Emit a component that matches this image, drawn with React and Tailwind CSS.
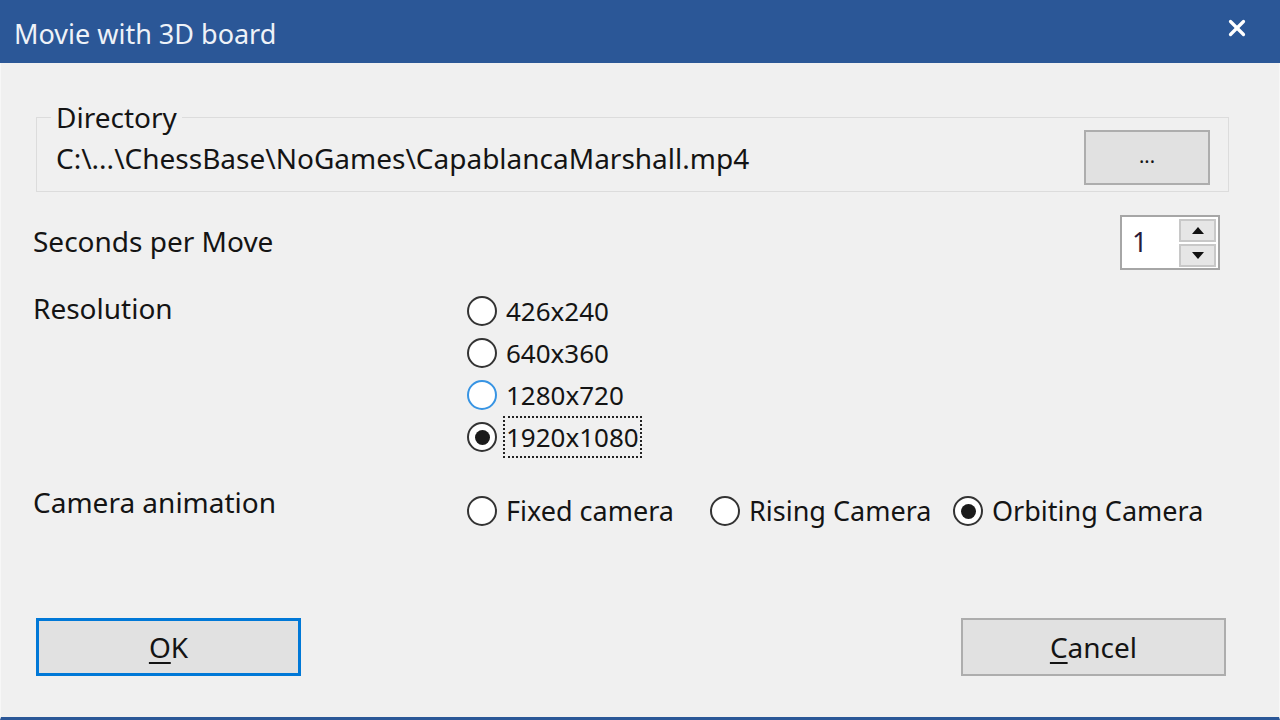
import { X } from 'lucide-react';

function Radio({ label, checked, hover, focus }) {
    return (
        <div className="flex items-center h-[42px] whitespace-nowrap">
            <span
                className={`w-[30px] h-[30px] rounded-full border-2 bg-white flex items-center justify-center shrink-0 ${hover ? 'border-[#3794e3]' : 'border-[#333333]'
                    }`}
            >
                {checked && <span className="w-[15px] h-[15px] rounded-full bg-[#1b1b1b]"></span>}
            </span>
            <span
                className={`ml-[6px] h-[42px] flex items-center pl-[1px] pr-[1px] ${focus ? 'border-2 border-dotted border-[#222]' : 'border-2 border-transparent'
                    }`}
            >
                {label}
            </span>
        </div>
    );
}

export default function App() {
    const resolutions = [
        { label: '426x240' },
        { label: '640x360' },
        { label: '1280x720', hover: true },
        { label: '1920x1080', checked: true, focus: true },
    ];

    const cameras = [
        { label: 'Fixed camera' },
        { label: 'Rising Camera' },
        { label: 'Orbiting Camera', checked: true },
    ];

    return (
        <div
            className="w-[1280px] h-[720px] bg-[#f0f0f0] flex flex-col text-[28px] text-[#141414] overflow-hidden"
            style={{ fontFamily: '"Noto Sans", "Open Sans", sans-serif' }}
        >
            <div className="h-[63px] bg-[#2b5797] flex items-center justify-between pl-[14px] pr-[30px] shrink-0">
                <span className="text-[27px] text-[#eef2f8] leading-none mt-[4px]">Movie with 3D board</span>
                <X className="w-[26px] h-[26px] text-white -mt-[8px]" strokeWidth={3} />
            </div>

            <div className="flex-1 flex flex-col border-b-[3px] border-[#2b5797] border-x border-x-[#f7f7f7]">
                <fieldset className="mt-[39px] ml-[35px] w-[1193px] border border-[#dcdcdc] pl-[14px] pr-[18px] pb-[6px]">
                    <legend className="px-[5px] leading-[30px]">Directory</legend>
                    <div className="flex items-center justify-between -mt-[2px] pl-[5px]">
                        <span>C:\...\ChessBase\NoGames\CapablancaMarshall.mp4</span>
                        <button className="w-[126px] h-[55px] bg-[#e1e1e1] border-2 border-[#adadad] flex items-center justify-center text-[20px] pb-[4px]">
                            ...
                        </button>
                    </div>
                </fieldset>

                <div className="flex items-center justify-between mt-[23px] pl-[32px] pr-[59px]">
                    <span className="-mt-[4px]">Seconds per Move</span>
                    <div className="w-[100px] h-[55px] bg-white border-2 border-[#a6a6a6] flex items-center justify-between pl-[10px] pr-[2px]">
                        <span className="text-[#2a1b3a] text-[27px]">1</span>
                        <div className="flex flex-col gap-[2px]">
                            <div className="w-[37px] h-[23px] bg-[#e6e6e6] border-2 border-[#c8c8c8] flex items-center justify-center">
                                <svg width="12" height="7" viewBox="0 0 12 7"><path d="M0 7 L6 0 L12 7 Z" fill="#111" /></svg>
                            </div>
                            <div className="w-[37px] h-[23px] bg-[#e6e6e6] border-2 border-[#c8c8c8] flex items-center justify-center">
                                <svg width="12" height="7" viewBox="0 0 12 7"><path d="M0 0 L6 7 L12 0 Z" fill="#111" /></svg>
                            </div>
                        </div>
                    </div>
                </div>

                <div className="flex items-start mt-[20px] pl-[32px]">
                    <div className="w-[434px] leading-[36px]">Resolution</div>
                    <div className="flex flex-col text-[26px]">
                        {resolutions.map((r) => (
                            <Radio key={r.label} {...r} />
                        ))}
                    </div>
                </div>

                <div className="flex items-start mt-[26px] pl-[32px]">
                    <div className="w-[434px] leading-[36px]">Camera animation</div>
                    <div className="flex mt-[6px] text-[27px]">
                        {cameras.map((c) => (
                            <div key={c.label} className="w-[243px]">
                                <Radio {...c} />
                            </div>
                        ))}
                    </div>
                </div>

                <div className="mt-auto flex justify-between pl-[35px] pr-[53px] pb-[41px]">
                    <button className="w-[265px] h-[58px] bg-[#e1e1e1] border-[3px] border-[#0078d7] flex items-center justify-center">
                        <span><span className="underline underline-offset-4">O</span>K</span>
                    </button>
                    <button className="w-[265px] h-[58px] bg-[#e1e1e1] border-2 border-[#adadad] flex items-center justify-center">
                        <span><span className="underline underline-offset-4">C</span>ancel</span>
                    </button>
                </div>
            </div>
        </div>
    );
}
